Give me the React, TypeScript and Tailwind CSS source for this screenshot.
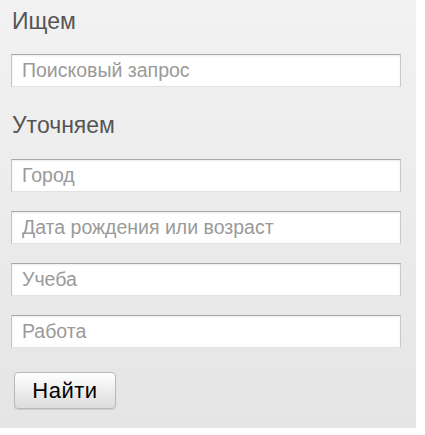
import React from 'react';

const fields = ['Город', 'Дата рождения или возраст', 'Учеба', 'Работа'];

function Field({ placeholder }: { placeholder: string }) {
  return (
    <input
      type="text"
      placeholder={placeholder}
      className="block w-[390px] h-[33px] bg-white pl-[10px] text-[19.5px] text-[#333] placeholder:text-[#9a9a9a] outline-none border border-t-[#a8a8a8] border-l-[#c4c4c4] border-r-[#c8c8c8] border-b-[#e2e2e2] shadow-[inset_0_1px_2px_rgba(0,0,0,0.08)]"
    />
  );
}

export default function App() {
  return (
    <div className="min-h-screen bg-white font-['Liberation_Sans',Arial,sans-serif]">
      <div className="w-[416px] h-[428px] bg-linear-to-b from-[#f2f2f2] to-[#e5e5e5] pt-[7px] pl-[11px]">
        <h2 className="h-[28px] leading-[28px] text-[23px] text-[#555] pl-[1px]">Ищем</h2>
        <div className="mt-[19px]">
          <Field placeholder="Поисковый запрос" />
        </div>

        <h2 className="mt-[24px] h-[28px] leading-[28px] text-[23px] text-[#555] pl-[1px]">Уточняем</h2>
        <div className="mt-[20px] flex flex-col gap-[19px]">
          {fields.map((f) => (
            <Field key={f} placeholder={f} />
          ))}
        </div>

        <button className="mt-[24px] ml-[3px] w-[102px] h-[37px] rounded-[4px] border border-[#b8b8b8] bg-linear-to-b from-white to-[#dcdcdc] text-[22px] tracking-[0.5px] text-black shadow-[0_1px_1px_rgba(0,0,0,0.1)]">
          Найти
        </button>
      </div>
    </div>
  );
}
